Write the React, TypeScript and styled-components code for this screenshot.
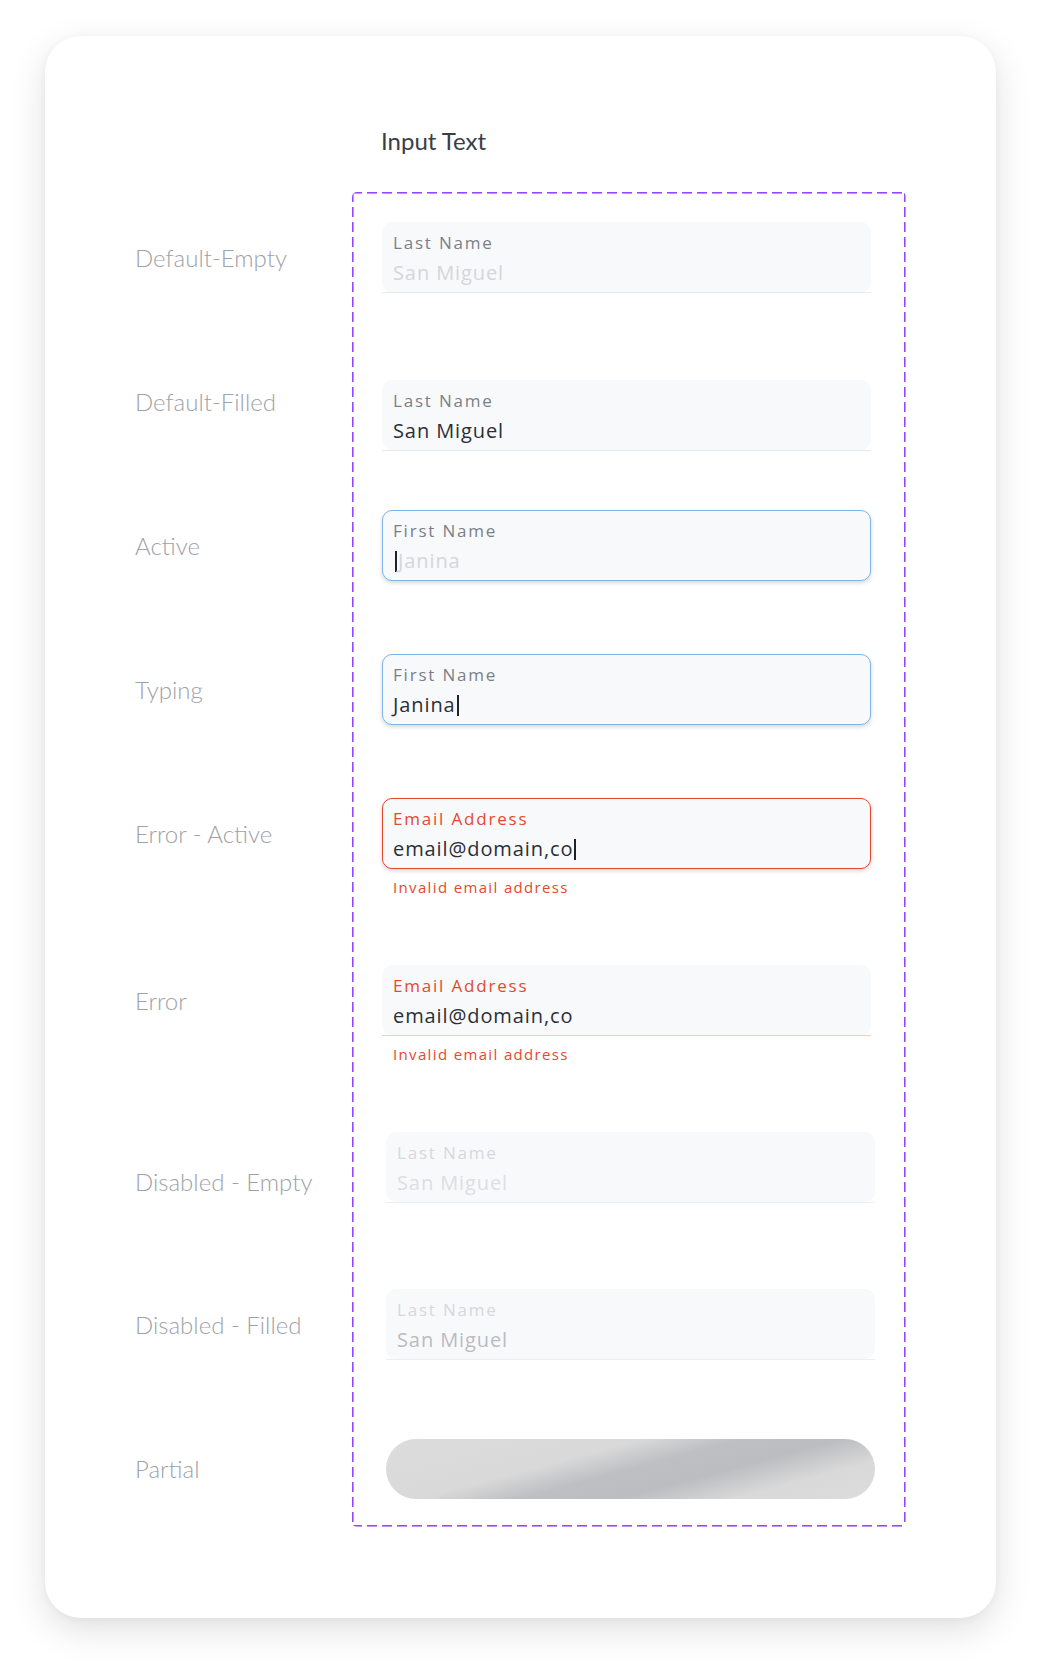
import styled, { createGlobalStyle } from 'styled-components';

const GlobalStyle = createGlobalStyle`
  html, body {
    margin: 0;
    padding: 0;
    background: #ffffff;
  }
  body {
    font-family: 'Lato', 'Liberation Sans', sans-serif;
  }
`;

const fieldFont = `'Open Sans', 'Noto Sans', sans-serif`;

type Variant = 'default' | 'active' | 'error' | 'errorActive' | 'disabled';

type Row = {
  name: string;
  gap: number;
  variant?: Variant;
  label?: string;
  value?: string;
  placeholder?: string;
  caret?: 'before' | 'after';
  error?: string;
  shift?: number;
  inset?: number;
  partial?: boolean;
};

const rows: Row[] = [
  { name: 'Default-Empty', gap: 0, variant: 'default', label: 'Last Name', placeholder: 'San Miguel' },
  { name: 'Default-Filled', gap: 73, variant: 'default', label: 'Last Name', value: 'San Miguel', shift: 14 },
  { name: 'Active', gap: 73, variant: 'active', label: 'First Name', placeholder: 'Janina', caret: 'before' },
  { name: 'Typing', gap: 73, variant: 'active', label: 'First Name', value: 'Janina', caret: 'after' },
  {
    name: 'Error - Active',
    gap: 73,
    variant: 'errorActive',
    label: 'Email Address',
    value: 'email@domain,co',
    caret: 'after',
    error: 'Invalid email address',
  },
  {
    name: 'Error',
    gap: 96,
    variant: 'error',
    label: 'Email Address',
    value: 'email@domain,co',
    error: 'Invalid email address',
  },
  { name: 'Disabled - Empty', gap: 110, variant: 'disabled', label: 'Last Name', placeholder: 'San Miguel', shift: -14, inset: 4 },
  { name: 'Disabled - Filled', gap: 72, variant: 'disabled', label: 'Last Name', value: 'San Miguel', inset: 4 },
  { name: 'Partial', gap: 73, partial: true, inset: 4 },
];

const tones: Record<Variant, { line: string; border: string; label: string; value: string; hint: string; shadow: string }> = {
  default: { line: '#e6e8eb', border: 'transparent', label: '#7c7f87', value: '#2b2f36', hint: '#d4d6da', shadow: 'none' },
  active: { line: 'none', border: '#7db5ec', label: '#7c7f87', value: '#2b2f36', hint: '#d4d6da', shadow: '0 2px 4px rgba(0, 0, 0, 0.16)' },
  errorActive: { line: 'none', border: '#e8472f', label: '#e6492f', value: '#2b2f36', hint: '#d4d6da', shadow: '0 2px 4px rgba(0, 0, 0, 0.16)' },
  error: { line: '#f6cbc4', border: 'transparent', label: '#e6492f', value: '#2b2f36', hint: '#d4d6da', shadow: 'none' },
  disabled: { line: '#eceef0', border: 'transparent', label: '#d6d8dc', value: '#b9bcc1', hint: '#dcdee2', shadow: 'none' },
};

export default function App() {
  return (
    <>
      <GlobalStyle />
      <Card>
        <Header>
          <span />
          <Title>Input Text</Title>
        </Header>
        <Body>
          <LabelColumn>
            {rows.map((row) => (
              <LabelSlot key={row.name} $gap={row.gap}>
                <StateName>{row.name}</StateName>
              </LabelSlot>
            ))}
          </LabelColumn>
          <ComponentSet>
            {rows.map((row) => (
              <FieldSlot key={row.name} $gap={row.gap} $center={!!row.partial}>
                {row.partial ? <Skeleton $inset={row.inset ?? 0} /> : <TextField row={row} />}
              </FieldSlot>
            ))}
          </ComponentSet>
        </Body>
      </Card>
    </>
  );
}

function TextField({ row }: { row: Row }) {
  const tone = tones[row.variant ?? 'default'];
  return (
    <>
      <Frame $line={tone.line} $shift={row.shift ?? 0} $inset={row.inset ?? 0}>
        <InputBox $border={tone.border} $shadow={tone.shadow} $tall={tone.line === 'none'}>
          <FieldLabel $color={tone.label}>{row.label}</FieldLabel>
          <FieldValue $color={row.value ? tone.value : tone.hint}>
            {row.caret === 'before' && <Caret $before />}
            {row.value ?? row.placeholder}
            {row.caret === 'after' && <Caret />}
          </FieldValue>
        </InputBox>
      </Frame>
      {row.error && <ErrorText>{row.error}</ErrorText>}
    </>
  );
}

const dash = '#9747ff';

const Card = styled.div`
  margin: 36px 43px 54px 45px;
  height: 1582px;
  box-sizing: border-box;
  padding: 90px 90px 0 90px;
  background: #ffffff;
  border-radius: 36px;
  box-shadow: 0 12px 36px rgba(0, 0, 0, 0.12), 0 2px 10px rgba(0, 0, 0, 0.04);
`;

const Header = styled.div`
  display: grid;
  grid-template-columns: 217px 1fr;
  margin-bottom: 37px;
`;

const Title = styled.h1`
  margin: 0;
  padding-left: 29px;
  font-family: 'Lato', sans-serif;
  font-weight: 400;
  font-size: 24px;
  line-height: 29px;
  color: #3b3e45;
`;

const Body = styled.div`
  display: grid;
  grid-template-columns: 217px 554px;
  align-items: start;
`;

const LabelColumn = styled.div`
  display: flex;
  flex-direction: column;
  padding-top: 30px;
`;

const LabelSlot = styled.div<{ $gap: number }>`
  height: 71px;
  margin-top: ${({ $gap }) => $gap}px;
  display: flex;
  align-items: center;
`;

const StateName = styled.div`
  font-family: 'Lato', sans-serif;
  font-weight: 300;
  font-size: 24px;
  line-height: 29px;
  color: #9ea1a8;
  white-space: nowrap;
`;

const ComponentSet = styled.div`
  display: flex;
  flex-direction: column;
  padding: 30px 35px 23px 30px;
  border-radius: 5px;
  background:
    repeating-linear-gradient(90deg, ${dash} 0 10px, transparent 10px 15px) top left / 100% 1.6px no-repeat,
    repeating-linear-gradient(90deg, ${dash} 0 10px, transparent 10px 15px) bottom left / 100% 1.6px no-repeat,
    repeating-linear-gradient(180deg, ${dash} 0 10px, transparent 10px 15px) top left / 1.6px 100% no-repeat,
    repeating-linear-gradient(180deg, ${dash} 0 10px, transparent 10px 15px) top right / 1.6px 100% no-repeat;
`;

const FieldSlot = styled.div<{ $gap: number; $center: boolean }>`
  height: 71px;
  margin-top: ${({ $gap }) => $gap}px;
  display: flex;
  flex-direction: column;
  justify-content: ${({ $center }) => ($center ? 'center' : 'flex-start')};
`;

const Frame = styled.div<{ $line: string; $shift: number; $inset: number }>`
  margin-top: ${({ $shift }) => $shift}px;
  margin-left: ${({ $inset }) => $inset}px;
  margin-right: ${({ $inset }) => -$inset}px;
  border-bottom: ${({ $line }) => ($line === 'none' ? 'none' : `1px solid ${$line}`)};
`;

const InputBox = styled.div<{ $border: string; $shadow: string; $tall: boolean }>`
  height: ${({ $tall }) => ($tall ? 71 : 70)}px;
  box-sizing: border-box;
  padding: 10px 10px 0;
  border: 1.5px solid ${({ $border }) => $border};
  border-radius: 10px;
  background: #f8f9fb;
  box-shadow: ${({ $shadow }) => $shadow};
  font-family: ${fieldFont};
`;

const FieldLabel = styled.div<{ $color: string }>`
  font-size: 17px;
  line-height: 20px;
  letter-spacing: 1.8px;
  color: ${({ $color }) => $color};
`;

const FieldValue = styled.div<{ $color: string }>`
  margin-top: 8px;
  font-size: 20px;
  line-height: 24px;
  letter-spacing: 0.9px;
  color: ${({ $color }) => $color};
  white-space: nowrap;
`;

const Caret = styled.span<{ $before?: boolean }>`
  display: inline-block;
  width: 2px;
  height: 21px;
  margin: ${({ $before }) => ($before ? '0 1px 0 2px' : '0 0 0 1px')};
  vertical-align: -4px;
  background: #1f2329;
`;

const ErrorText = styled.div`
  margin-top: 8px;
  padding-left: 11px;
  font-family: ${fieldFont};
  font-size: 15px;
  line-height: 20px;
  letter-spacing: 1.35px;
  color: #e6492f;
  white-space: nowrap;
`;

const Skeleton = styled.div<{ $inset: number }>`
  height: 60px;
  margin-left: ${({ $inset }) => $inset}px;
  margin-right: ${({ $inset }) => -$inset}px;
  border-radius: 30px;
  background: linear-gradient(
    165deg,
    #dcdcdc 0%,
    #d9d9d9 36%,
    #bebfc2 50%,
    #bcbdc0 64%,
    #d9d9d9 80%,
    #dcdcdc 100%
  );
`;
